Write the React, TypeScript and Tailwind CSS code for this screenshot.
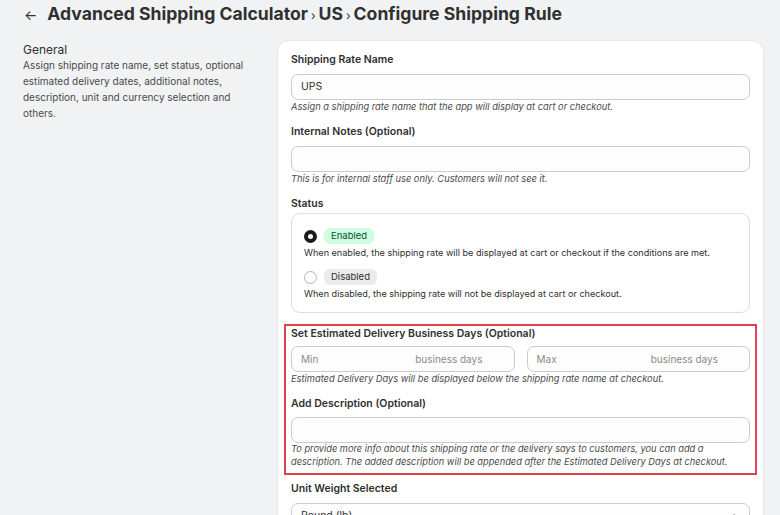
import { ChevronUp } from 'lucide-react';

const font = { fontFamily: 'Inter, "Noto Sans", sans-serif' };

function Label({ children, className = 'leading-[16px]' }: { children: React.ReactNode; className?: string }) {
  return <p className={`text-[10.5px] font-semibold text-[#303030] ${className}`}>{children}</p>;
}

function Help({ children }: { children: React.ReactNode }) {
  return <p className="text-[9.3px] leading-[13px] italic text-[#4a4a4a]">{children}</p>;
}

function Field({ value, className = '' }: { value?: string; className?: string }) {
  return (
    <div className={`h-[26px] rounded-[7px] border border-[#c9cccf] bg-[#fdfdfd] px-[9px] flex items-center text-[10.5px] text-[#303030] ${className}`}>
      {value}
    </div>
  );
}

function DaysInput({ placeholder }: { placeholder: string }) {
  return (
    <div className="flex-1 h-[26px] rounded-[7px] border border-[#c9cccf] bg-[#fdfdfd] pl-[9px] pr-[31px] flex items-center justify-between text-[10px] text-[#8a8a8a]">
      <span>{placeholder}</span>
      <span>business days</span>
    </div>
  );
}

export default function App() {
  return (
    <div className="w-[780px] h-[515px] overflow-hidden bg-[#f1f2f4] text-[#303030]" style={font}>
      <div className="flex items-center gap-[10px] px-[24px] h-[29px]">
        <span className="text-[14px] leading-none text-[#303030]">←</span>
        <h1 className="text-[17.6px] leading-[24px] font-bold text-[#303030]">
          Advanced Shipping Calculator<span className="mx-[3px] text-[12px] font-normal">›</span>US
          <span className="mx-[3px] text-[12px] font-normal">›</span>Configure Shipping Rule
        </h1>
      </div>

      <div className="flex mt-[12px] pl-[23px] pr-[17px] gap-[24px]">
        <div className="w-[231px] shrink-0 pt-[1px]">
          <p className="text-[12px] leading-[15px] text-[#303030]">General</p>
          <p className="text-[10px] leading-[16px] text-[#4a4a4a]">
            Assign shipping rate name, set status, optional estimated delivery dates, additional notes,
            description, unit and currency selection and others.
          </p>
        </div>

        <div className="flex-1 bg-white rounded-[11px] shadow-[0_0_0_1px_#e6e7e9] px-[13px] pt-[11px] pb-[20px]">
          <Label>Shipping Rate Name</Label>
          <Field value="UPS" className="mt-[6px]" />
          <Help>Assign a shipping rate name that the app will display at cart or checkout.</Help>

          <div className="mt-[11px]">
            <Label>Internal Notes (Optional)</Label>
          </div>
          <Field className="mt-[6px]" />
          <Help>This is for internal staff use only. Customers will not see it.</Help>

          <div className="mt-[11px]">
            <Label>Status</Label>
          </div>
          <div className="mt-[1px] rounded-[9px] border border-[#dcdde0] px-[12px] pt-[14px] pb-[10px]">
            <div className="flex items-center gap-[7px] h-[16px]">
              <span className="w-[13px] h-[13px] rounded-full border-[4px] border-[#1a1a1a] bg-white" />
              <span className="px-[7px] h-[16px] rounded-[6px] bg-[#cdfee1] text-[#0c5132] text-[9.5px] leading-[16px]">Enabled</span>
            </div>
            <p className="mt-[1px] text-[9.1px] leading-[16px] text-[#303030]">
              When enabled, the shipping rate will be displayed at cart or checkout if the conditions are met.
            </p>
            <div className="mt-[8px] flex items-center gap-[7px] h-[16px]">
              <span className="w-[13px] h-[13px] rounded-full border border-[#b5b5b5] bg-white" />
              <span className="px-[7px] h-[16px] rounded-[6px] bg-[#ebebeb] text-[#303030] text-[9.5px] leading-[16px]">Disabled</span>
            </div>
            <p className="mt-[1px] text-[9.1px] leading-[16px] text-[#303030]">
              When disabled, the shipping rate will not be displayed at cart or checkout.
            </p>
          </div>

          <div className="mt-[11px] -mx-[7px] border-2 border-[#e0434d] px-[5px] pb-[5px]">
            <Label className="leading-[13px] pt-[1px]">Set Estimated Delivery Business Days (Optional)</Label>
            <div className="mt-[6px] flex gap-[12px]">
              <DaysInput placeholder="Min" />
              <DaysInput placeholder="Max" />
            </div>
            <Help>Estimated Delivery Days will be displayed below the shipping rate name at checkout.</Help>

            <div className="mt-[11px]">
              <Label>Add Description (Optional)</Label>
            </div>
            <Field className="mt-[5px]" />
            <p className="text-[9.25px] leading-[12.5px] italic text-[#4a4a4a]">
              To provide more info about this shipping rate or the delivery says to customers, you can add a
              description. The added description will be appended after the Estimated Delivery Days at checkout.
            </p>
          </div>

          <div className="mt-[6px]">
            <Label>Unit Weight Selected</Label>
          </div>
          <div className="mt-[6px] h-[26px] rounded-[7px] border border-[#c9cccf] bg-[#fdfdfd] px-[9px] flex items-center justify-between text-[10.5px] text-[#303030]">
            <span>Pound (lb)</span>
            <ChevronUp className="w-[12px] h-[12px] text-[#616161]" />
          </div>
        </div>
      </div>
    </div>
  );
}
